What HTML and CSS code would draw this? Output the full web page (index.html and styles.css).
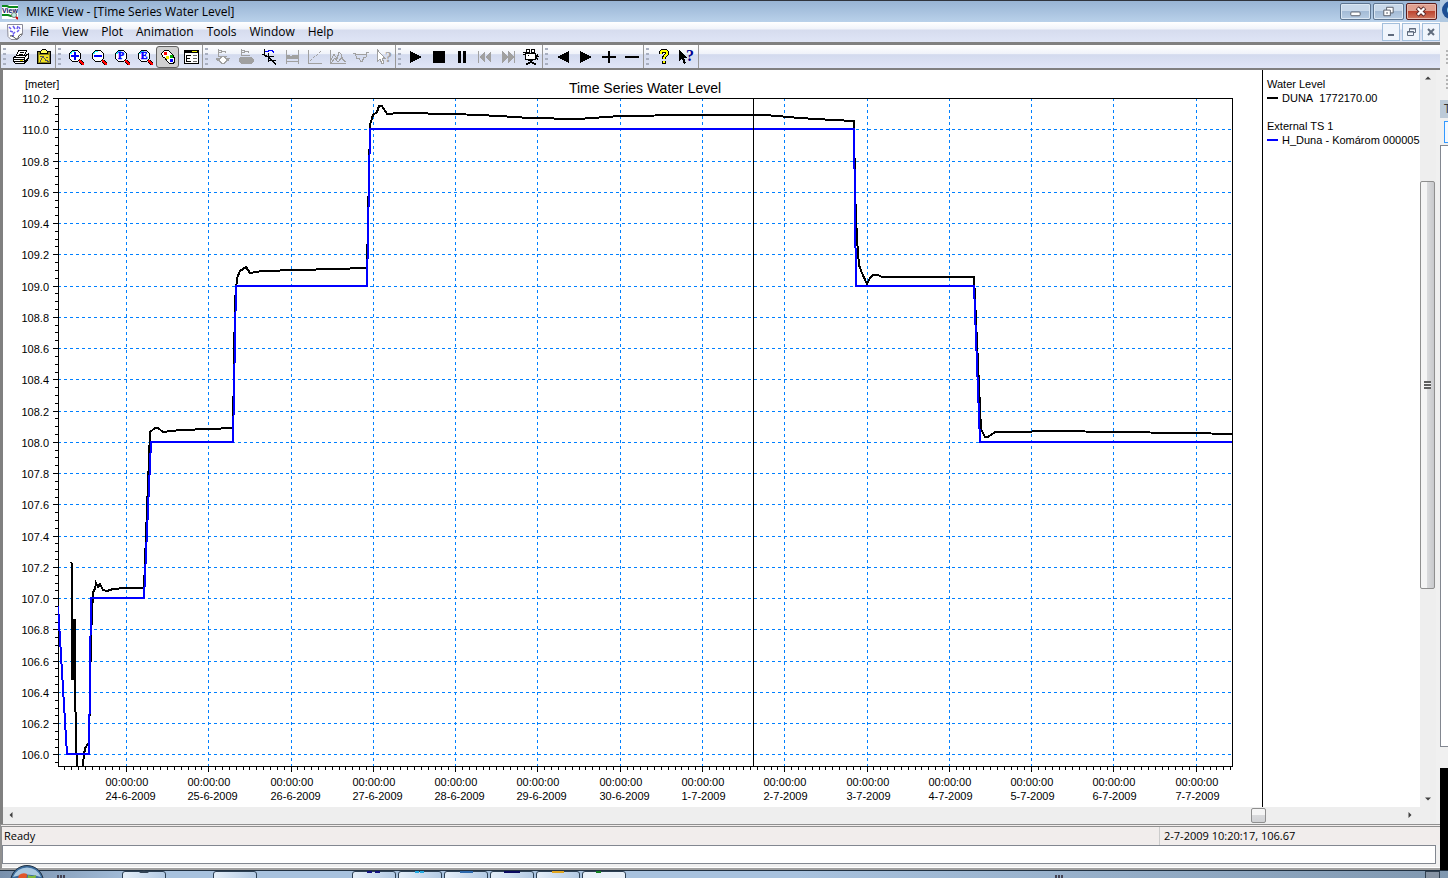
FILE: index.html
```html
<!DOCTYPE html>
<html lang="en">
<head>
    <meta charset="UTF-8">
    <meta name="viewport" content="width=device-width, initial-scale=1.0">
    <title>MIKE View - [Time Series Water Level]</title>
    <link rel="stylesheet" href="styles.css">
</head>
<body>
    <div class="desktop">
        <div class="window">
            <header class="title-bar">
                <svg class="app-icon" viewBox="0 0 16 16">
                    <rect width="16" height="14" y="1" fill="#fff"/>
                    <path d="M0 2h5l2 1h9M0 11h6l3 1h3" fill="none" stroke="#0a8a1a" stroke-width="2"/>
                    <text x="0" y="9" class="icon-view">View</text>
                    <circle cx="12" cy="11" r="2.5" fill="#bfeee6" stroke="#777"/>
                    <path d="M14 13l2 2" stroke="#c00" stroke-width="2"/>
                </svg>
                <h1 class="title">MIKE View - [Time Series Water Level]</h1>
                <div class="win-buttons">
                    <button class="win-button" aria-label="Minimize"><svg viewBox="0 0 28 16"><rect x="9.5" y="8.5" width="10" height="4" rx="1" fill="#fff" stroke="#555b66"/></svg></button>
                    <button class="win-button" aria-label="Restore"><svg viewBox="0 0 28 16"><path d="M12.500 3.500h7v6h-7z" fill="#fff" stroke="#555b66"/><path d="M9.500 6.500h7v6h-7z" fill="#fff" stroke="#555b66"/><path d="M12 9h2v1h-2z" fill="#555b66"/></svg></button>
                    <button class="win-button close" aria-label="Close"><svg viewBox="0 0 28 16"><path d="M10 4l8 8M18 4l-8 8" stroke="#5a2a2a" stroke-width="4.500"/><path d="M10.500 4.500l7 7M17.500 4.500l-7 7" stroke="#fff" stroke-width="2.500"/></svg></button>
                </div>
            </header>

            <nav class="menu-bar">
                <svg class="doc-icon" viewBox="0 0 16 16">
                    <path d="M.5 .5h15v10l-5 5H4l-3-3z" fill="#fff" stroke="#8a8a98"/>
                    <path d="M2 3l2 2M6 2l2 3M11 2l-1 3M3 7l3 1M6 10l2-2M10 8l2-2M5 12l2-1M12 3l1 2" stroke="#6a5cf0" stroke-width="1.500"/>
                    <path d="M3 12c3-1 5 3 7 3s0-4 5-5" fill="none" stroke="#333"/>
                </svg>
                <button class="menu">File</button>
                <button class="menu">View</button>
                <button class="menu">Plot</button>
                <button class="menu">Animation</button>
                <button class="menu">Tools</button>
                <button class="menu">Window</button>
                <button class="menu">Help</button>
                <div class="mdi-buttons">
                    <button class="mdi-button" aria-label="Minimize document"><svg viewBox="0 0 16 16"><path d="M5 11h6" stroke="#5f6b7d" stroke-width="2"/></svg></button>
                    <button class="mdi-button" aria-label="Restore document"><svg viewBox="0 0 16 16"><path d="M6.500 7V4.500h6v4H11M4.500 7.500h6v4h-6zM6 5h7M4 8h7" fill="none" stroke="#5f6b7d"/></svg></button>
                    <button class="mdi-button" aria-label="Close document"><svg viewBox="0 0 16 16"><path d="M5 5l6 6M11 5l-6 6" stroke="#5f6b7d" stroke-width="2"/></svg></button>
                </div>
            </nav>

            <div class="toolbar">
                <div class="tool-group">
                    <button class="tool" aria-label="Print"><svg viewBox="0 0 18 18">
                        <path d="M6.500 2.500h8l-2 5h-8z" fill="#fff" stroke="#000"/>
                        <path d="M8 4.500h4M7 6.500h4" stroke="#000"/>
                        <path d="M1.500 9.500l3-2h9l3-2v5l-4 5h-9l-2-2z" fill="#fff" stroke="#000"/>
                        <path d="M1.500 9.500h11l4-4M12.500 9.500v6M1.500 11.500h11M2 13.500h10M13 13.500l4-4" fill="none" stroke="#000"/>
                        <path d="M8 12.500h3" stroke="#e5d800"/></svg></button>
                    <button class="tool" aria-label="Copy to clipboard"><svg viewBox="0 0 18 18">
                        <path d="M2.500 3.500h13v12h-13z" fill="#8a8520" stroke="#000"/>
                        <path d="M5.500 5.500v-2l2-2h3l2 2v2z" fill="#ffff60" stroke="#000"/>
                        <path d="M4 7h10v7H4z" fill="#f0e020"/>
                        <path d="M5 13.500l3-5 3 4 3 1M5 8.500h2M11 9.500h2" fill="none" stroke="#555"/></svg></button>
                </div>
                <div class="tool-group">
                    <button class="tool" aria-label="Zoom in"><svg viewBox="0 0 18 18"><use href="#lens"/><path d="M4 7h8v2H4zM7 4h2v8H7z" fill="#00f"/></svg></button>
                    <button class="tool" aria-label="Zoom out"><svg viewBox="0 0 18 18"><use href="#lens"/><path d="M4 7h8v2H4z" fill="#00f"/></svg></button>
                    <button class="tool" aria-label="Zoom previous"><svg viewBox="0 0 18 18"><use href="#lens"/><text x="8" y="11" class="lens-letter">P</text></svg></button>
                    <button class="tool" aria-label="Zoom extent"><svg viewBox="0 0 18 18"><use href="#lens"/><text x="8" y="11" class="lens-letter">E</text></svg></button>
                    <button class="tool pressed" aria-label="Colours" aria-pressed="true"><svg viewBox="0 0 18 18">
                        <path d="M5.500 2.500h4l4 4 2 4v4l-2 1h-3l-3-3-1-2-3-2-1-3z" fill="#fff" stroke="#000"/>
                        <path d="M5 4h3v3H5z" fill="#f00"/><path d="M11 7h3v3h-3z" fill="#0a0"/><path d="M7 8h3v3H7z" fill="#ee0"/><path d="M11 11h3v3h-3z" fill="#00f"/></svg></button>
                    <button class="tool" aria-label="Options"><svg viewBox="0 0 18 18">
                        <path d="M2.500 2.500h14v13h-14z" fill="#fff" stroke="#000"/>
                        <path d="M2 2h15v3H2z"/><path d="M10 3h5v1h-5z" fill="#ee0"/>
                        <path d="M4 7h5v1H5v2h3v1H5v2h4v1H4z"/><path d="M11 7h4v1h-4zM11 10h4v1h-4zM11 13h4v1h-4z" fill="#666"/></svg></button>
                </div>
                <div class="tool-group">
                    <button class="tool" aria-label="Cross section" disabled><svg viewBox="0 0 18 18"><path d="M4.500 1v7M4 4.500h3l1-1h3l1 1M5 2.500h3M4 8.500h9" fill="none" stroke="#a0a0a0"/><circle cx="9" cy="12" r="3.500" fill="#fff" stroke="#a0a0a0" stroke-width="1.500"/><path d="M2 10h4v3H3zM12 10h4l-1 3h-3z" fill="#a0a0a0"/></svg></button>
                    <button class="tool" aria-label="Filled section" disabled><svg viewBox="0 0 18 18"><path d="M4.500 1v7M4 4.500h3l1-1h3l1 1M5 2.500h3M4 7.500h9" fill="none" stroke="#a0a0a0"/><path d="M4 9h10l3 2v3l-3 2H5l-3-2v-4z" fill="#a0a0a0"/></svg></button>
                    <button class="tool" aria-label="Longitudinal profile"><svg viewBox="0 0 18 18"><path d="M4.500 1v7M2 6.500l4 1 4 3 6 6M5 8.500h9M8.500 5v9M8 12.500h8" fill="none" stroke="#000"/><path d="M5 3.500h3l1-1h3l2 2" fill="none" stroke="#00f"/></svg></button>
                    <button class="tool" aria-label="Profile" disabled><svg viewBox="0 0 18 18"><path d="M3 2h1v14H3zM15 2h1v14h-1zM4 13h11v1H4z" fill="#a0a0a0"/><path d="M3 7h3l2 1 2-1h5v4H3z" fill="#a0a0a0"/></svg></button>
                    <button class="tool" aria-label="QH relation" disabled><svg viewBox="0 0 18 18"><path d="M2.500 2v13.500H16" fill="none" stroke="#a0a0a0"/><path d="M4 13l4-4 3-2 5-5" fill="none" stroke="#a0a0a0" stroke-dasharray="3 1"/></svg></button>
                    <button class="tool" aria-label="Time series" disabled><svg viewBox="0 0 18 18"><path d="M1.500 2v13.500H17M2 12l3-6 3 5 2-7 2 2 1 5 4 3M2 15l4-5 3 4 4-5 3 5" fill="none" stroke="#a0a0a0"/></svg></button>
                    <button class="tool" aria-label="Section plot" disabled><svg viewBox="0 0 18 18"><path d="M1 5.500h2l2 5h2l2 3h1l2-4h2l1-5h2M4 6.500h10" fill="none" stroke="#a0a0a0"/></svg></button>
                    <button class="tool" aria-label="Query" disabled><svg viewBox="0 0 18 18"><path d="M2.500 2l7 8H7l2 5-2 1-2-5-2.500 2z" fill="#fff" stroke="#a0a0a0"/><text x="10" y="14" class="mark grey">?</text></svg></button>
                </div>
                <div class="tool-group">
                    <button class="tool" aria-label="Play"><svg viewBox="0 0 18 18"><path d="M3 3v12l12-6z"/></svg></button>
                    <button class="tool" aria-label="Stop"><svg viewBox="0 0 18 18"><path d="M3 3h12v12H3z"/></svg></button>
                    <button class="tool" aria-label="Pause"><svg viewBox="0 0 18 18"><path d="M5 3h3v12H5zM10 3h3v12h-3z"/></svg></button>
                    <button class="tool" aria-label="Rewind" disabled><svg viewBox="0 0 18 18"><path d="M2 3h1v12H2zM9 3v12L3 9zM15 3v12L9 9z" fill="#a0a0a0"/></svg></button>
                    <button class="tool" aria-label="Forward" disabled><svg viewBox="0 0 18 18"><path d="M15 3h1v12h-1zM9 3v12l6-6zM3 3v12l6-6z" fill="#a0a0a0"/></svg></button>
                    <button class="tool" aria-label="Record"><svg viewBox="0 0 18 18"><path d="M4.500 1.500h3v3h-3zM9.500 1.500h3v3h-3zM3.500 5.500h10v6h-10z" fill="#fff" stroke="#000"/><path d="M1 4.500h3M1 6.500h2M6 7.500h1M14 8.500l2-2M14 8.500h3M14 9.500l2 2M6 12.500h5" fill="none" stroke="#000"/><path d="M8 12h2v2h2v1h2v2h-2v-1h-2v-1H8v1H6v1H4v-2h2v-1h2z"/></svg></button>
                </div>
                <div class="tool-group">
                    <button class="tool" aria-label="Step back"><svg viewBox="0 0 18 18"><path d="M15 3v12L3 9z"/></svg></button>
                    <button class="tool" aria-label="Step forward"><svg viewBox="0 0 18 18"><path d="M3 3v12l12-6z"/></svg></button>
                    <button class="tool" aria-label="Increase"><svg viewBox="0 0 18 18"><path d="M2 8h14v2H2zM8 3h2v12H8z"/></svg></button>
                    <button class="tool" aria-label="Decrease"><svg viewBox="0 0 18 18"><path d="M2 8h14v2H2z"/></svg></button>
                </div>
                <div class="tool-group">
                    <button class="tool" aria-label="Help topics"><svg viewBox="0 0 18 18"><path d="M6 5.500c0-4 6-4 6 0 0 2-3 2-3 5M9 12.500v3" fill="none" stroke="#000" stroke-width="4"/><path d="M6 5.500c0-4 6-4 6 0 0 2-3 2-3 5M9 13v2" fill="none" stroke="#ff0" stroke-width="2"/></svg></button>
                    <button class="tool" aria-label="Context help"><svg viewBox="0 0 18 18"><path d="M1 2l8 8H6l2 5-2 1-2-5-3 2z"/><text x="8" y="13" class="mark navy">?</text></svg></button>
                </div>
            </div>

            <main class="client">
                <div class="view">
                    <svg class="chart" id="chart" role="img" aria-label="Time Series Water Level"></svg>
                    <aside class="legend">
                        <h2 class="legend-title">Water Level</h2>
                        <p class="legend-item"><span class="swatch"></span>DUNA&nbsp; 1772170.00</p>
                        <h2 class="legend-title">External TS 1</h2>
                        <p class="legend-item"><span class="swatch blue"></span>H_Duna - Komárom 000005</p>
                    </aside>
                    <div class="scroll vertical">
                        <button class="arrow" aria-label="Scroll up"><svg viewBox="0 0 8 8"><path d="M0 6h8L4 2z"/></svg></button>
                        <div class="track">
                            <div class="before"></div>
                            <div class="thumb"><span class="ridges"></span></div>
                            <div class="after"></div>
                        </div>
                        <button class="arrow" aria-label="Scroll down"><svg viewBox="0 0 8 8"><path d="M0 2h8L4 6z"/></svg></button>
                    </div>
                </div>
                <div class="scroll horizontal">
                    <button class="arrow" aria-label="Scroll left"><svg viewBox="0 0 8 8"><path d="M6 0v8L2 4z"/></svg></button>
                    <div class="track">
                        <div class="before"></div>
                        <div class="thumb"></div>
                        <div class="after"></div>
                    </div>
                    <button class="arrow" aria-label="Scroll right"><svg viewBox="0 0 8 8"><path d="M2 0v8l4-4z"/></svg></button>
                </div>
            </main>

            <footer class="status-bar">
                <span class="status">Ready</span>
                <span class="position">2-7-2009 10:20:17, 106.67</span>
            </footer>
            <div class="output">
                <input class="output-line" type="text" aria-label="Output" readonly>
            </div>
        </div>

        <div class="behind">
            <svg class="globe" viewBox="0 0 8 22"><circle cx="11" cy="10" r="9" fill="#1d4f94"/><circle cx="12" cy="10" r="5" fill="#8fe0f5"/></svg>
            <div class="behind-grip"></div>
            <div class="behind-grip"></div>
            <div class="behind-head">T</div>
            <div class="behind-box"></div>
            <div class="behind-page"></div>
            <div class="behind-dark"></div>
        </div>
    </div>

    <div class="taskbar">
        <button class="start" aria-label="Start"><svg viewBox="0 0 34 34">
            <circle cx="17" cy="17" r="16.500" fill="#3c6c9c" stroke="#234"/>
            <path d="M3 12a15 15 0 0 1 28 0q-14-5-28 0z" fill="#a9c8e0"/>
            <path d="M9 10q4-3 8-1l-1 8H7z" fill="#e2562a"/><path d="M18 10q4 2 8 0l-1 8h-8z" fill="#7fb93b"/></svg></button>
        <span class="task-dots"></span>
        <button class="task" aria-label="Browser"><svg viewBox="0 0 24 4"><path d="M7 4q5-5 10 0z" fill="#345"/></svg></button>
        <span class="task-plain"></span>
        <button class="task" aria-label="Explorer"></button>
        <span class="task-space"></span>
        <button class="task" aria-label="MIKE View"><svg viewBox="0 0 24 4"><path d="M5 2h5v2H5zM13 2h5v2h-5z" fill="#111180"/></svg></button>
        <button class="task" aria-label="Messenger"><svg viewBox="0 0 24 4"><path d="M7 2h4v2H7zM12 2h4v2h-4z" fill="#20a8e0"/></svg></button>
        <button class="task" aria-label="Viewer"><svg viewBox="0 0 24 4"><path d="M6 2h13v2H6z" fill="#2b68ad"/></svg></button>
        <button class="task" aria-label="Console"><svg viewBox="0 0 24 4"><path d="M4 2h16v2H4z" fill="#0a0a60"/></svg></button>
        <button class="task" aria-label="Folder"><svg viewBox="0 0 24 4"><path d="M6 2h12v2H6z" fill="#e0a520"/></svg></button>
        <button class="task active" aria-label="Documents"><svg viewBox="0 0 24 4"><path d="M4 2h5v2H4z" fill="#108020"/></svg></button>
        <span class="tray-dots"></span>
        <span class="show-desktop"></span>
    </div>

    <svg class="defs" width="0" height="0">
        <symbol id="lens" viewBox="0 0 18 18">
            <path d="M5.500 2.500h5l3 3v5l-3 3h-5l-3-3v-5z" fill="#fff" stroke="#000"/>
            <path d="M3 6h2V4h3V3H5L3 5z" fill="#2ff"/>
            <path d="M12 12h2v1h1v1h1v1h1v2h-2v-1h-1v-1h-1v-1h-1z" fill="#f00"/>
            <path d="M14 12h1v1h1v1h1v1h-1v-1h-1v-1h-1zM12 14h1v1h1v1h1v1h-1v-1h-1v-1h-1z"/>
        </symbol>
    </svg>
    <script src="script.js"></script>
</body>
</html>
```
FILE: styles.css
```css
* {
    box-sizing: border-box;
}
body {
    margin: 0;
    height: 100vh;
    display: flex;
    flex-direction: column;
    overflow: hidden;
    font-family: "Open Sans", "Noto Sans", sans-serif;
    font-size: 12px;
    color: #000;
    background: #a6c0dc;
}
h1, h2, p {
    margin: 0;
    font-weight: normal;
}
button {
    margin: 0;
    padding: 0;
    border: none;
    background: none;
    font: inherit;
    color: inherit;
}
svg {
    display: block;
}
.defs {
    position: absolute;
}
.desktop {
    flex: 1;
    min-height: 0;
    display: flex;
}
.window {
    flex: 1;
    min-width: 0;
    display: flex;
    flex-direction: column;
    background: #f0f0f0;
}

/* title bar */
.title-bar {
    height: 22px;
    display: flex;
    align-items: center;
    padding: 0 3px 0 2px;
    border-top: 1px solid #30343c;
    background: linear-gradient(#98b4d4, #b9d1ea);
}
.app-icon {
    width: 16px;
    height: 16px;
    margin-right: 8px;
}
.icon-view {
    font: bold 7px "Liberation Sans", sans-serif;
    fill: #101060;
}
.title {
    flex: 1;
    font-size: 12px;
    line-height: 20px;
}
.win-buttons {
    display: flex;
    gap: 2px;
}
.win-button {
    width: 31px;
    height: 17px;
    border: 1px solid #5e7590;
    border-radius: 2px;
    background: linear-gradient(#c8d8ea 45%, #a4bbd6 50%, #b8cde4);
    box-shadow: inset 0 0 0 1px #dbe7f3;
}
.win-button svg {
    width: 28px;
    height: 15px;
}
.win-button.close {
    border-color: #5a1c1c;
    background: linear-gradient(#e0a090 45%, #bd4530 50%, #d07860);
    box-shadow: inset 0 0 0 1px #e8b8ac;
}

/* menus */
.menu-bar {
    height: 20px;
    display: flex;
    align-items: center;
    padding: 0 0 0 7px;
    background: linear-gradient(#fff, #f0f3fa 35%, #d6dcee 40%, #dfe5f6);
}
.doc-icon {
    width: 16px;
    height: 16px;
    margin-right: 1px;
}
.menu {
    padding: 0 7px 0 6px;
    line-height: 18px;
}
.mdi-buttons {
    display: flex;
    gap: 2px;
    margin-left: auto;
}
.mdi-button {
    width: 18px;
    height: 18px;
    border: 1px solid #a3bfdc;
    background: #f0f5fc;
}

/* toolbar */
.toolbar {
    height: 28px;
    display: flex;
    border: solid #808080;
    border-width: 3px 0 2px 1px;
    background: linear-gradient(#fff, #f0f3fa 38%, #d3daee 42%, #e0e6f7);
}
.tool-group {
    display: flex;
    align-items: center;
    border-right: 1px solid #989898;
}
.tool-group::before {
    content: "";
    width: 3px;
    height: 18px;
    margin: 0 3px 0 2px;
    background: repeating-linear-gradient(#a8afc0 0 2px, transparent 2px 5px);
}
.tool {
    width: 23px;
    height: 22px;
    display: flex;
    align-items: center;
    justify-content: center;
}
.tool svg {
    flex: none;
    width: 18px;
    height: 18px;
    shape-rendering: crispEdges;
}
.tool.pressed {
    border: 1px solid #606060;
    border-radius: 3px;
    background: #d0d0d0;
}
.lens-letter {
    font: bold 10px "Liberation Serif", serif;
    text-anchor: middle;
    fill: #00f;
    stroke: #00f;
    stroke-width: 0.5px;
}
.mark {
    font: bold 14px "Liberation Serif", serif;
}
.mark.grey {
    fill: #a0a0a0;
}
.mark.navy {
    fill: #000090;
    font-size: 16px;
}

/* document */
.client {
    flex: 1;
    min-height: 0;
    display: flex;
    flex-direction: column;
    border-left: 3px solid #808080;
    border-right: 4px solid #f0f0f0;
}
.view {
    flex: 1;
    min-height: 0;
    display: flex;
    background: #fff;
}
.chart {
    flex: 1;
    min-width: 0;
    height: 100%;
    font-family: "Liberation Sans", Arial, sans-serif;
    font-size: 11px;
}
.chart-title {
    font-size: 14px;
    text-anchor: middle;
}
.y-label {
    text-anchor: end;
}
.grid, .axis, .series, .cursor {
    fill: none;
    shape-rendering: crispEdges;
}
.grid {
    stroke: #0080ff;
    stroke-dasharray: 3 3;
}
.axis, .cursor {
    stroke: #000;
}
.series {
    stroke: #000;
    stroke-width: 2;
}
.series.blue {
    stroke: #00f;
}
.legend {
    width: 158px;
    padding: 7px 0 0 4px;
    border-left: 1px solid #000;
    font-family: "Liberation Sans", Arial, sans-serif;
}
.legend-title, .legend-item {
    font-size: 11px;
    line-height: 14px;
    white-space: nowrap;
}
.legend-item {
    display: flex;
    align-items: center;
    margin-bottom: 14px;
}
.swatch {
    width: 11px;
    height: 2px;
    margin-right: 4px;
    background: #000;
}
.swatch.blue {
    background: #00f;
}

/* scroll bars */
.scroll, .track {
    display: flex;
}
.scroll {
    background: #eee;
}
.track {
    flex: 1;
}
.vertical, .vertical .track {
    flex-direction: column;
}
.vertical {
    width: 16px;
}
.horizontal {
    height: 17px;
    padding-right: 18px;
}
.arrow {
    width: 16px;
    height: 16px;
    display: flex;
    align-items: center;
    justify-content: center;
}
.arrow svg {
    width: 6px;
    height: 6px;
    fill: #404040;
}
.thumb {
    display: flex;
    align-items: center;
    justify-content: center;
    border: 1px solid #8f8f8f;
    border-radius: 2px;
}
.vertical .thumb {
    flex: 407;
    margin-right: 1px;
    background: linear-gradient(to right, #f5f5f5 45%, #d9dadc 50%, #c8c9cc);
}
.vertical .before {
    flex: 95;
}
.vertical .after {
    flex: 202;
}
.horizontal .thumb {
    width: 15px;
    height: 15px;
    margin-top: 1px;
    background: linear-gradient(#f5f5f5 45%, #d9dadc 50%, #d0d1d4);
}
.horizontal .before {
    flex: 1233;
}
.horizontal .after {
    flex: 136;
}
.ridges {
    width: 7px;
    height: 8px;
    background: repeating-linear-gradient(#606060 0 2px, #f4f4f4 2px 3px);
}

/* status */
.status-bar {
    display: flex;
    height: 21px;
    line-height: 18px;
    border-top: 3px double #909090;
    border-left: 2px solid #909090;
    background: #f1edec;
    font-size: 11px;
}
.status {
    flex: 1;
    padding-left: 2px;
}
.position {
    width: 281px;
    padding-left: 4px;
    border-left: 1px solid #ccc;
}
.output {
    padding: 0 4px 4px 0;
    border-left: 2px solid #909090;
    border-bottom: 2px solid #a0a0a0;
    box-shadow: inset 0 -1px #fff;
}
.output-line {
    display: block;
    width: 100%;
    height: 19px;
    padding: 0 4px;
    border: 1px solid #828790;
    background: #fff;
    font: inherit;
}

/* window behind */
.behind {
    width: 8px;
    display: flex;
    flex-direction: column;
    overflow: hidden;
    background: #f0f0f0;
}
.globe {
    width: 8px;
    height: 22px;
    margin-bottom: 28px;
    background: #b0c8e0;
}
.behind-grip {
    height: 16px;
    margin: 0 0 9px 6px;
    background: repeating-linear-gradient(#b4b4b4 0 2px, #f0f0f0 2px 4px);
}
.behind-head {
    height: 18px;
    padding-left: 4px;
    overflow: hidden;
    line-height: 18px;
    background: #bccad8;
    color: #333;
}
.behind-box {
    height: 22px;
    margin: 3px 0 2px 4px;
    border: 1px solid #3399ff;
    border-right: none;
    background: #f4f9ff;
}
.behind-page {
    flex: 602;
    border: 1px solid #828790;
    border-right: none;
    background: #fff;
}
.behind-dark {
    flex: 102;
    margin-top: 21px;
    background: #000;
}

/* taskbar */
.taskbar {
    height: 8px;
    display: flex;
    align-items: flex-start;
    padding-left: 10px;
    border-top: 1px solid #203040;
    background: linear-gradient(to right, #7890ac, #a8c2de 10%, #a8c2de 55%, #8098b0);
}
.start {
    width: 34px;
    height: 34px;
    margin-top: -6px;
}
.task-dots, .tray-dots {
    width: 9px;
    height: 3px;
    background: repeating-linear-gradient(to right, #445 0 2px, transparent 2px 3px);
}
.task-dots {
    margin: 4px 56px 0 13px;
}
.task {
    width: 44px;
    height: 24px;
    margin-right: 2px;
    border: 1px solid #2c4054;
    border-radius: 3px;
    background: linear-gradient(to right, #e4eef8, #b4cbe4);
}
.task.active {
    background: #e8f0f8;
}
.task svg {
    width: 24px;
    height: 4px;
    margin: -14px auto 0;
}
.task-plain {
    width: 45px;
}
.task-space {
    width: 93px;
}
.tray-dots {
    margin: 4px 0 0 auto;
}
.show-desktop {
    width: 15px;
    height: 24px;
    margin: 0 8px 0 361px;
    border: 1px solid #304050;
    background: #8794a4;
}
```
FILE: script.js
```js
// x is in days counted from 24-6-2009, y in meters
const xMin = -0.826, xMax = 13.44;
const yMin = 105.926, yMax = 110.2;
const cursorDay = 7.62;
const margin = { left: 55, right: 30, top: 28, bottom: 41 };

const days = ["24-6-2009", "25-6-2009", "26-6-2009", "27-6-2009", "28-6-2009", "29-6-2009", "30-6-2009",
    "1-7-2009", "2-7-2009", "3-7-2009", "4-7-2009", "5-7-2009", "6-7-2009", "7-7-2009"];

const duna = [
    [-0.67, 107.23], [-0.66, 107.22], [-0.656, 106.48], [-0.644, 106.48], [-0.638, 106.86], [-0.62, 106.86],
    [-0.62, 106.46], [-0.608, 106.1], [-0.595, 105.9], [-0.54, 105.9], [-0.498, 106.04], [-0.45, 106.07],
    [-0.425, 106.75], [-0.4, 107.04], [-0.38, 107.06], [-0.365, 107.1], [-0.34, 107.07], [-0.316, 107.09],
    [-0.28, 107.055], [-0.23, 107.045], [-0.16, 107.06], [0, 107.065], [0.215, 107.065], [0.297, 108.06],
    [0.35, 108.09], [0.39, 108.09], [0.45, 108.065], [0.66, 108.075], [1.02, 108.085], [1.3, 108.09],
    [1.32, 108.9], [1.35, 109.05], [1.385, 109.09], [1.46, 109.12], [1.51, 109.08], [1.65, 109.09],
    [2.1, 109.1], [2.93, 109.11], [2.965, 110.03], [3, 110.09], [3.05, 110.11], [3.075, 110.15],
    [3.11, 110.15], [3.17, 110.1], [3.33, 110.105], [4, 110.095], [4.55, 110.085], [4.9, 110.075],
    [5.49, 110.065], [6, 110.085], [6.85, 110.09], [7.76, 110.09], [8.19, 110.075], [8.59, 110.06],
    [8.845, 110.055], [8.858, 109.6], [8.88, 109.3], [8.906, 109.13], [8.943, 109.08], [9, 109.01],
    [9.04, 109.05], [9.08, 109.07], [9.14, 109.07], [9.19, 109.055], [10.3, 109.055], [10.39, 108.08],
    [10.44, 108.03], [10.47, 108.03], [10.56, 108.065], [10.68, 108.06], [11.35, 108.07], [11.96, 108.06],
    [12.93, 108.055], [13.44, 108.05]
];

const komarom = [
    [-0.82, 106.95], [-0.72, 106], [-0.45, 106], [-0.42, 107], [0.22, 107], [0.3, 108], [1.3, 108],
    [1.335, 109], [2.93, 109], [2.96, 110], [8.845, 110], [8.87, 109], [10.3, 109], [10.375, 108], [13.44, 108]
];

function add(parent, name, attrs, text) {
    const el = document.createElementNS("http://www.w3.org/2000/svg", name);
    for (const key in attrs) {
        el.setAttribute(key, attrs[key]);
    }
    if (text) {
        el.textContent = text;
    }
    parent.appendChild(el);
    return el;
}

function drawChart() {
    const svg = document.getElementById("chart");
    const box = svg.getBoundingClientRect();
    svg.replaceChildren();

    const left = margin.left;
    const right = Math.round(box.width) - margin.right;
    const top = margin.top;
    const bottom = Math.round(box.height) - margin.bottom;
    const sx = d => Math.round(left + (d - xMin) / (xMax - xMin) * (right - left));
    const sy = v => Math.round(bottom - (v - yMin) / (yMax - yMin) * (bottom - top));

    let grid = "";
    let axis = `M${left - 5} ${top + 0.5}H${right + 0.5}V${bottom + 0.5}H${left + 0.5}V${top}`;

    // levels, labelled each 0.2 m with a tick each 0.05 m
    for (let i = 0; i <= 85; i++) {
        const level = 105.95 + i * 0.05;
        const y = sy(level) + 0.5;
        const major = i % 4 === 1;
        axis += `M${left - (major ? 5 : 3)} ${y}H${left}`;
        if (major) {
            if (i < 85) {
                grid += `M${left} ${y}H${right}`;
            }
            add(svg, "text", { class: "y-label", x: left - 9, y: y + 4 }, level.toFixed(1));
        }
    }

    // time, labelled each day with a tick each 2 hours
    for (let i = -9; i <= 161; i++) {
        const x = sx(i / 12) + 0.5;
        const major = i % 12 === 0;
        axis += `M${x} ${bottom}V${bottom + (major ? 6 : 4)}`;
        if (major) {
            grid += `M${x} ${top}V${bottom}`;
            add(svg, "text", { x: x - 21, y: bottom + 20 }, "00:00:00");
            add(svg, "text", { x: x - 21, y: bottom + 34 }, days[i / 12]);
        }
    }

    add(svg, "text", { x: 22, y: 18 }, "[meter]");
    add(svg, "text", { class: "chart-title", x: (left + right) / 2, y: 23 }, "Time Series Water Level");
    add(svg, "path", { class: "grid", d: grid });
    add(svg, "path", { class: "axis", d: axis });

    const clip = add(svg, "clipPath", { id: "plot" });
    add(clip, "rect", { x: left, y: top, width: right - left, height: bottom - top });
    const points = data => data.map(p => sx(p[0]) + "," + sy(p[1])).join(" ");
    add(svg, "polyline", { class: "series", "clip-path": "url(#plot)", points: points(duna) });
    add(svg, "polyline", { class: "series blue", "clip-path": "url(#plot)", points: points(komarom) });

    const cx = sx(cursorDay) + 0.5;
    add(svg, "path", { class: "cursor", d: `M${cx} ${top}V${bottom}` });
}

drawChart();
window.addEventListener("resize", drawChart);
```
